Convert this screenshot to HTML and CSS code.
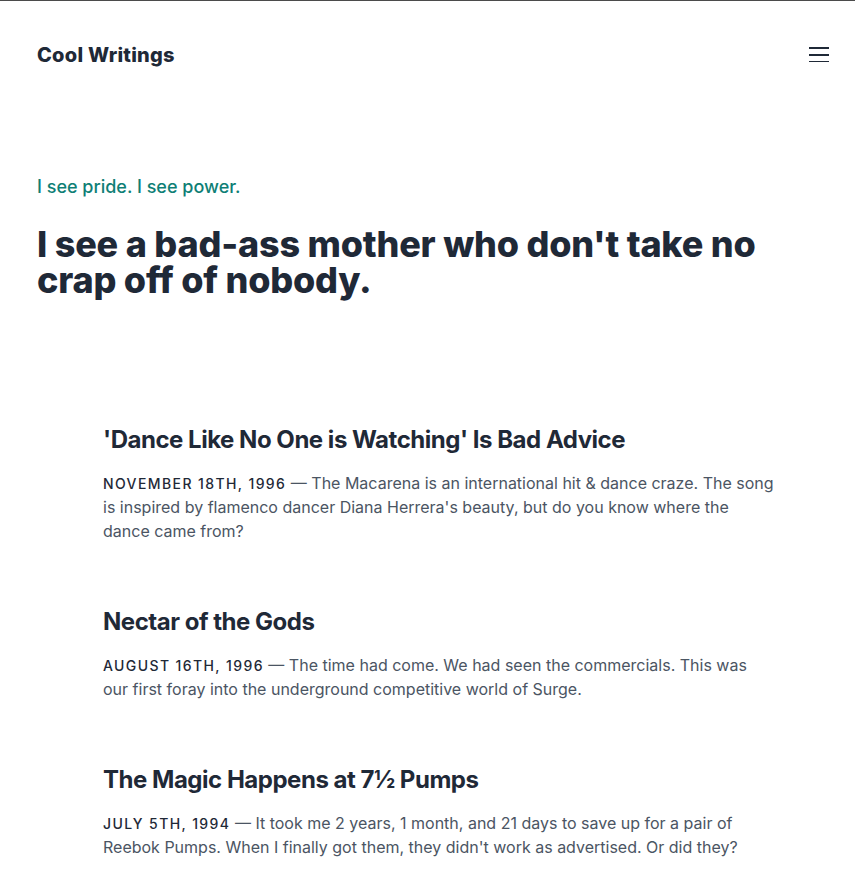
FILE: index.html
```html
<!DOCTYPE html>
<html lang="en">
<head>
<meta charset="utf-8">
<title>Cool Writings</title>
<link rel="stylesheet" href="styles.css">
</head>
<body>
<div class="page">
  <header class="site-header">
    <a class="brand" href="#">Cool Writings</a>
    <button class="menu" aria-label="Menu">
      <svg width="20" height="16" viewBox="0 0 20 16"><rect x="0" y="1" width="20" height="2" fill="#1f2937"/><rect x="0" y="8" width="20" height="2" fill="#1f2937"/><rect x="0" y="15" width="20" height="2" fill="#1f2937"/></svg>
    </button>
  </header>
  <section class="hero">
    <p class="tagline">I see pride. I see power.</p>
    <h1 class="headline">I see a bad-ass mother who don't take no crap off of nobody.</h1>
  </section>
  <main class="posts">
    <article class="post">
      <h2 class="post-title">'Dance Like No One is Watching' Is Bad Advice</h2>
      <p class="post-summary"><span class="post-date">November 18th, 1996</span> — The Macarena is an international hit &amp; dance craze. The song is inspired by flamenco dancer Diana Herrera's beauty, but do you know where the dance came from?</p>
    </article>
    <article class="post">
      <h2 class="post-title">Nectar of the Gods</h2>
      <p class="post-summary"><span class="post-date">August 16th, 1996</span> — The time had come. We had seen the commercials. This was our first foray into the underground competitive world of Surge.</p>
    </article>
    <article class="post">
      <h2 class="post-title">The Magic Happens at 7½ Pumps</h2>
      <p class="post-summary"><span class="post-date">July 5th, 1994</span> — It took me 2 years, 1 month, and 21 days to save up for a pair of Reebok Pumps. When I finally got them, they didn't work as advertised. Or did they?</p>
    </article>
  </main>
</div>
</body>
</html>
```

FILE: styles.css
```css
* { box-sizing: border-box; }
html, body { margin: 0; padding: 0; }
body {
  font-family: Inter, "Noto Sans", sans-serif;
  color: #1f2937;
  background: #fff;
  border-top: 1px solid #4b4b4b;
}
.page {
  padding: 0 37px 0 37px;
}
.site-header {
  display: flex;
  justify-content: space-between;
  align-items: center;
  padding-top: 40px;
  height: 68px;
}
.brand {
  font-size: 20px;
  line-height: 28px;
  font-weight: 800;
  letter-spacing: 0.25px;
  color: #1f2937;
  text-decoration: none;
}
.menu {
  border: 0;
  background: none;
  padding: 0;
  margin-right: -11px;
  width: 20px;
  height: 18px;
  display: flex;
}
.hero {
  padding-top: 104px;
}
.tagline {
  margin: 0;
  font-size: 18px;
  line-height: 28px;
  font-weight: 500;
  color: #0f7f76;
}
.headline {
  margin: 25px 0 0 0;
  font-size: 36px;
  line-height: 36px;
  font-weight: 800;
  letter-spacing: -0.2px;
  color: #1f2937;
  max-width: 781px;
}
.posts {
  padding: 126px 0 0 66px;
  display: flex;
  flex-direction: column;
  gap: 63px;
}
.post { max-width: 672px; }
.post-title {
  margin: 0;
  font-size: 24px;
  line-height: 32px;
  font-weight: 700;
  letter-spacing: -0.02em;
  color: #1f2937;
}
.post-summary {
  margin: 15px 0 0 0;
  font-size: 16px;
  line-height: 24px;
  color: #4b5563;
}
.post-date {
  text-transform: uppercase;
  font-size: 14px;
  line-height: 1;
  font-weight: 500;
  letter-spacing: 0.1em;
  color: #1f2937;
}
```
